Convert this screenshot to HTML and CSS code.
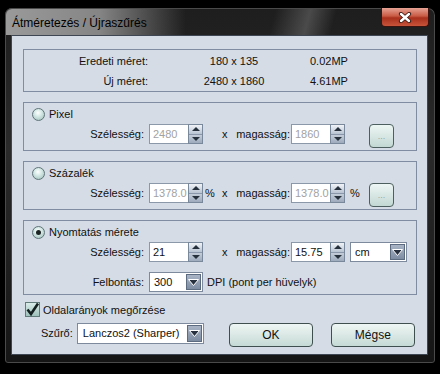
FILE: index.html
```html
<!DOCTYPE html>
<html lang="hu">
<head>
  <meta charset="UTF-8" />
  <title>Átméretezés / Újraszűrés</title>
  <link rel="stylesheet" href="styles.css">
</head>
<body>

  <!-- Ablak keret -->
  <div class="window">
    <div class="titlebar">
      <span class="title">Átméretezés / Újraszűrés</span>
      <span class="close">
        <svg width="14" height="11" viewBox="0 0 14 11">
          <path d="M3 2 L11 9 M11 2 L3 9" stroke="#3a1a14" stroke-width="4.2" stroke-linecap="round" />
          <path d="M3 2 L11 9 M11 2 L3 9" stroke="#fff" stroke-width="2.4" stroke-linecap="round" />
        </svg>
      </span>
    </div>

    <div class="client">

      <!-- Méret információ -->
      <div class="info">
        <div class="info-row">
          <span class="info-label">Eredeti méret:</span>
          <span class="info-value">180 x 135</span>
          <span class="info-mp">0.02MP</span>
        </div>
        <div class="info-row">
          <span class="info-label">Új méret:</span>
          <span class="info-value">2480 x 1860</span>
          <span class="info-mp">4.61MP</span>
        </div>
      </div>

      <!-- Pixel -->
      <div class="group">
        <div class="group-head"><span class="radio"></span>Pixel</div>
        <div class="size-row">
          <span class="lbl">Szélesség:</span>
          <div class="spinner disabled">
            <span class="field">2480</span>
            <span class="spin-btns"><span class="up"></span><span class="down"></span></span>
          </div>
          <span class="unit"></span>
          <span class="times">x</span>
          <span class="lbl2">magasság:</span>
          <div class="spinner disabled">
            <span class="field">1860</span>
            <span class="spin-btns"><span class="up"></span><span class="down"></span></span>
          </div>
          <span class="unit2"></span>
          <button class="dots">...</button>
        </div>
      </div>

      <!-- Százalék -->
      <div class="group">
        <div class="group-head"><span class="radio"></span>Százalék</div>
        <div class="size-row">
          <span class="lbl">Szélesség:</span>
          <div class="spinner disabled">
            <span class="field">1378.0</span>
            <span class="spin-btns"><span class="up"></span><span class="down"></span></span>
          </div>
          <span class="unit">%</span>
          <span class="times">x</span>
          <span class="lbl2">magasság:</span>
          <div class="spinner disabled">
            <span class="field">1378.0</span>
            <span class="spin-btns"><span class="up"></span><span class="down"></span></span>
          </div>
          <span class="unit2">%</span>
          <button class="dots">...</button>
        </div>
      </div>

      <!-- Nyomtatás mérete -->
      <div class="group">
        <div class="group-head"><span class="radio checked"></span>Nyomtatás mérete</div>
        <div class="size-row">
          <span class="lbl">Szélesség:</span>
          <div class="spinner">
            <span class="field">21</span>
            <span class="spin-btns"><span class="up"></span><span class="down"></span></span>
          </div>
          <span class="unit"></span>
          <span class="times">x</span>
          <span class="lbl2">magasság:</span>
          <div class="spinner">
            <span class="field">15.75</span>
            <span class="spin-btns"><span class="up"></span><span class="down"></span></span>
          </div>
          <div class="combo combo-unit">
            <span class="field">cm</span>
            <span class="combo-btn"><svg width="11" height="7" viewBox="0 0 11 7"><polygon points="0.5,0.5 10.5,0.5 5.5,6.5" fill="#26303e" stroke="#fff" /></svg></span>
          </div>
        </div>
        <div class="size-row second">
          <span class="lbl">Felbontás:</span>
          <div class="combo combo-dpi">
            <span class="field">300</span>
            <span class="combo-btn"><svg width="11" height="7" viewBox="0 0 11 7"><polygon points="0.5,0.5 10.5,0.5 5.5,6.5" fill="#26303e" stroke="#fff" /></svg></span>
          </div>
          <span class="dpi">DPI (pont per hüvelyk)</span>
        </div>
      </div>

      <!-- Oldalarány -->
      <div class="check-row">
        <span class="checkbox">
          <svg width="15" height="15" viewBox="0 0 15 15"><path d="M2.5 7.5 L6 12 L13 1.5" fill="none" stroke="#14201f" stroke-width="2.6" /></svg>
        </span>
        Oldalarányok megőrzése
      </div>

      <!-- Szűrő + gombok -->
      <div class="bottom-row">
        <span class="filter-lbl">Szűrő:</span>
        <div class="combo combo-filter">
          <span class="field">Lanczos2 (Sharper)</span>
          <span class="combo-btn"><svg width="11" height="7" viewBox="0 0 11 7"><polygon points="0.5,0.5 10.5,0.5 5.5,6.5" fill="#26303e" stroke="#fff" /></svg></span>
        </div>
        <button class="btn btn-ok">OK</button>
        <button class="btn btn-cancel">Mégse</button>
      </div>

    </div>
  </div>

</body>
</html>
```

FILE: styles.css
```css
body {
  margin: 0;
  background: #000;
  font-family: "Liberation Sans", Arial, sans-serif;
  font-size: 11px;
  color: #111;
  width: 440px;
  height: 374px;
  overflow: hidden;
}

/* Ablak keret */
.window {
  margin: 8px 0 0 5px;
  width: 430px;
  height: 355px;
  box-sizing: border-box;
  padding: 0 7px 8px 6px;
  border-radius: 7px 7px 3px 3px;
  display: flex;
  flex-direction: column;
  background:
    linear-gradient(to right, #9a9a9a 0, #858585 22%, rgba(40, 40, 40, 0) 42%) top left / 100% 27px no-repeat,
    linear-gradient(105deg, rgba(0, 0, 0, 0) 62%, rgba(110, 110, 110, 0.55) 70%, rgba(0, 0, 0, 0) 76%) top left / 100% 27px no-repeat,
    linear-gradient(to bottom, #1e1e1e 0, #2a2a2a 40%, #151515 100%);
  box-shadow: inset 0 0 0 1px #4a4a4a;
}
.titlebar {
  height: 27px;
  display: flex;
  align-items: flex-start;
  flex-shrink: 0;
}
.title {
  font-size: 12px;
  line-height: 14px;
  margin: 8px 0 0 1px;
  color: #000;
}
.close {
  margin-left: auto;
  margin-right: -1px;
  width: 48px;
  height: 19px;
  box-sizing: border-box;
  display: flex;
  align-items: center;
  justify-content: center;
  border: 1px solid #3a1410;
  border-top: none;
  border-radius: 0 0 4px 4px;
  background: linear-gradient(to bottom, #e6a294 0, #c95a44 45%, #a8301c 55%, #c8543a 100%);
}

/* Zone client */
.client {
  flex: 1;
  background: #d5dce5;
  border: 1px solid #3d4652;
  padding: 13px 10px 0 11px;
}

.info {
  border: 1px solid #7f8ca1;
  height: 43px;
  box-sizing: border-box;
  padding-top: 1px;
}
.info-row {
  display: flex;
  align-items: center;
  height: 20px;
}
.info-label {
  width: 124px;
  text-align: right;
}
.info-value {
  width: 132px;
  margin-left: 20px;
  text-align: center;
}
.info-mp {
  margin-left: 10px;
}

/* Groupes */
.group {
  border: 1px solid #7f8ca1;
  margin-top: 10px;
  padding: 3px 0 2px 0;
}
.group:last-of-type {
  padding-bottom: 5px;
}
.group-head {
  display: flex;
  align-items: center;
  height: 16px;
  padding-left: 8px;
}
.radio {
  width: 13px;
  height: 13px;
  box-sizing: border-box;
  border-radius: 50%;
  border: 1px solid #5f7478;
  background: radial-gradient(circle at 45% 35%, #ffffff 0, #d8ebe8 35%, #9cbcb7 100%);
  margin-right: 4px;
  position: relative;
}
.radio.checked::after {
  content: "";
  position: absolute;
  left: 3px;
  top: 3px;
  width: 5px;
  height: 5px;
  border-radius: 50%;
  background: #1b2323;
}

.size-row {
  display: flex;
  align-items: flex-start;
  margin-top: 2px;
  height: 24px;
}
.size-row.second {
  margin-top: 6px;
  height: 20px;
}
.lbl {
  width: 120px;
  text-align: right;
  line-height: 20px;
  margin-right: 5px;
}
.lbl2 {
  width: 54px;
  text-align: right;
  line-height: 20px;
  margin-right: 1px;
}
.unit {
  width: 14px;
  padding-left: 2px;
  box-sizing: border-box;
  line-height: 20px;
}
.unit2 {
  width: 24px;
  padding-left: 5px;
  box-sizing: border-box;
  line-height: 20px;
}
.times {
  width: 6px;
  margin: 0 8px 0 5px;
  line-height: 20px;
}

/* Spinner */
.spinner {
  display: flex;
  width: 54px;
  height: 20px;
}
.field {
  flex: 1;
  background: #fff;
  border: 1px solid #8b98aa;
  padding-left: 3px;
  line-height: 18px;
  font-size: 11px;
  color: #111;
  white-space: nowrap;
  overflow: hidden;
}
.spinner .field {
  border-right: none;
}
.spinner.disabled .field {
  color: #a2a2a2;
}
.spin-btns {
  width: 15px;
  box-sizing: border-box;
  border: 1px solid #7a889c;
  display: flex;
  flex-direction: column;
}
.spin-btns span {
  flex: 1;
  display: flex;
  align-items: center;
  justify-content: center;
  background: linear-gradient(to bottom, #f1f4f8, #b8c3d2);
}
.spin-btns .down {
  border-top: 1px solid #8a97aa;
  background: linear-gradient(to bottom, #c4cdd9, #9eabbd);
}
.spin-btns .up::after {
  content: "";
  border-left: 4px solid transparent;
  border-right: 4px solid transparent;
  border-bottom: 4px solid #26303c;
}
.spin-btns .down::after {
  content: "";
  border-left: 4px solid transparent;
  border-right: 4px solid transparent;
  border-top: 4px solid #26303c;
}

/* Combo */
.combo {
  display: flex;
  height: 20px;
  box-sizing: border-box;
  border: 1px solid #7d8a9e;
  background: #fff;
}
.combo .field {
  border: none;
  line-height: 18px;
  padding-left: 4px;
}
.combo-btn {
  width: 15px;
  margin: 1px;
  box-sizing: border-box;
  border: 1px solid #5d6b80;
  display: flex;
  align-items: center;
  justify-content: center;
  background: linear-gradient(to bottom, #a9b5c6, #7e8ca2);
}
.combo-unit {
  width: 57px;
  margin-left: 5px;
}
.combo-dpi {
  width: 54px;
}
.dpi {
  margin-left: 4px;
  line-height: 20px;
}
.combo-filter {
  width: 127px;
  height: 21px;
}
.combo-filter .field {
  padding-left: 5px;
  line-height: 19px;
}

/* Boutons */
.dots {
  width: 25px;
  height: 24px;
  padding: 0;
  border: 1px solid #4d5f5e;
  border-radius: 4px;
  background: linear-gradient(to bottom, #edf6f4, #c3d8d3);
  color: #9aa6a6;
  font-size: 9px;
  font-family: "Liberation Sans", Arial, sans-serif;
}
.btn {
  width: 84px;
  height: 24px;
  padding: 0;
  border: 1px solid #3f4f4f;
  border-radius: 4px;
  background: linear-gradient(to bottom, #eef6f4, #c6dad5);
  font-family: "Liberation Sans", Arial, sans-serif;
  font-size: 12px;
  color: #111;
}
.btn-ok {
  margin-left: 25px;
}
.btn-cancel {
  margin-left: 18px;
}

.check-row {
  display: flex;
  align-items: center;
  height: 15px;
  margin-top: 7px;
  padding-left: 2px;
  font-size: 11px;
}
.checkbox {
  width: 15px;
  height: 15px;
  box-sizing: border-box;
  border: 1px solid #5f7a78;
  background: linear-gradient(to bottom, #d9ece8, #9fc1bb);
  margin-right: 3px;
  display: flex;
}
.checkbox svg {
  margin: -1px;
}

.bottom-row {
  display: flex;
  align-items: flex-start;
  margin-top: 6px;
}
.filter-lbl {
  margin-left: 18px;
  margin-right: 4px;
  line-height: 20px;
  font-size: 11px;
}
```
